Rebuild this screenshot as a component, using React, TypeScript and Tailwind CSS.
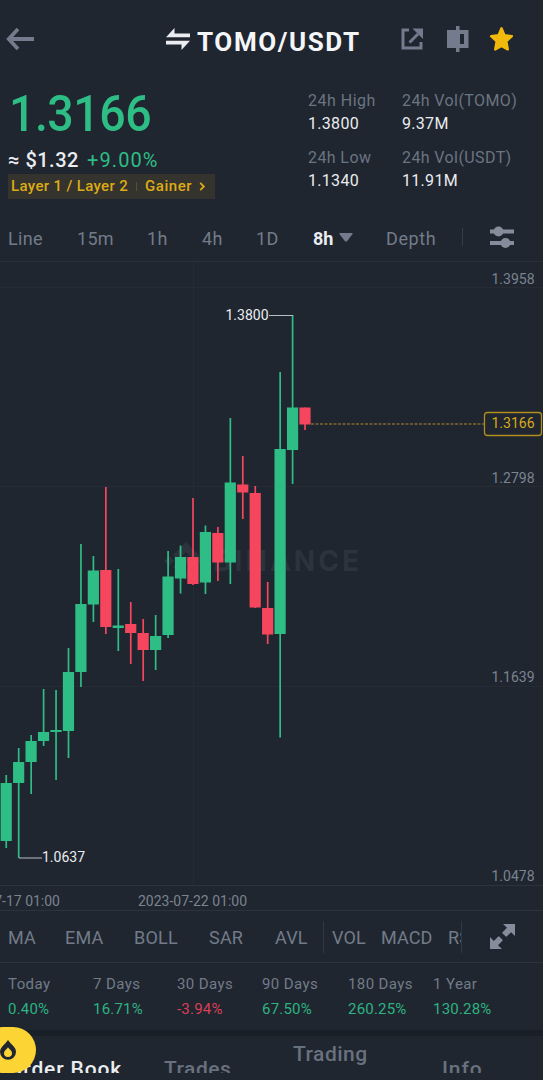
import clsx from "clsx";

const intervals = ["Line", "15m", "1h", "4h", "1D"];

const indicators = ["MA", "EMA", "BOLL", "SAR", "AVL"];

const returns = [
  { label: "Today", value: "0.40%" },
  { label: "7 Days", value: "16.71%" },
  { label: "30 Days", value: "-3.94%" },
  { label: "90 Days", value: "67.50%" },
  { label: "180 Days", value: "260.25%" },
  { label: "1 Year", value: "130.28%" },
];

const stats = [
  { label: "24h High", value: "1.3800", tracking: "tracking-[0.5px]" },
  { label: "24h Vol(TOMO)", value: "9.37M", tracking: "tracking-[0.4px]" },
  { label: "24h Low", value: "1.1340", tracking: "tracking-[0.4px]" },
  { label: "24h Vol(USDT)", value: "11.91M", tracking: "tracking-[0.4px]" },
];

// [up, body top, body bottom, wick top, wick bottom]
const candles: [boolean, number, number, number, number][] = [
  [true, 783, 841, 775, 848],
  [true, 762, 783, 748, 858],
  [true, 741, 762, 735, 794],
  [true, 732, 741, 689, 746],
  [true, 730, 732, 690, 780],
  [true, 672, 731, 648, 758],
  [true, 604, 672, 544, 687],
  [true, 570.5, 604.5, 556, 622],
  [false, 570, 627, 487, 634],
  [true, 625.5, 628, 569, 651],
  [false, 624, 633, 602, 664],
  [false, 633, 650, 619, 681],
  [true, 636, 650, 615, 670],
  [true, 576.5, 635, 551, 638],
  [true, 557, 578.5, 545.5, 593.5],
  [false, 557, 584, 498, 585],
  [true, 532, 582.5, 525.5, 594],
  [false, 533, 562.5, 527, 581],
  [true, 482.5, 562.5, 418, 584],
  [false, 484.5, 492.5, 456, 519],
  [false, 493, 607.5, 486, 608],
  [false, 608, 634.5, 582, 644],
  [true, 449, 634, 372, 737.5],
  [true, 407.5, 450, 315, 484],
  [false, 407.5, 424.5, 407.5, 430],
];

const priceScale = [
  { y: 284, label: "1.3958" },
  { y: 483, label: "1.2798" },
  { y: 682, label: "1.1639" },
  { y: 881, label: "1.0478" },
];

function Header() {
  return (
    <header className="flex h-[78px] items-center">
      <svg className="ml-[6px] h-[24px] w-[30px]" viewBox="0 0 30 24" fill="none" stroke="#737b8c" strokeWidth="3.8">
        <path d="M28 12H4M12 2L2.8 12l9.2 10" />
      </svg>
      <svg className="ml-[129px] h-[24px] w-[26px]" viewBox="0 0 26 24" fill="#eaecef">
        <path d="M1 10.3L9.500 1v5.400H25v3.900zM25 13.700L16.500 23v-5.400H1v-3.900z" />
      </svg>
      <h1 className="mt-[6px] ml-[6px] w-[166px] text-[26px] font-bold tracking-[1.6px] text-[#f5f6f8]">TOMO/USDT</h1>
      <svg className="ml-[37px] h-[24px] w-[24px]" viewBox="0 0 24 24" fill="none" stroke="#737b8c" strokeWidth="3">
        <path d="M9 3H3v18h18V15M9.5 15.5L18 7" />
        <path d="M12.5 1.500H23V12z" fill="#737b8c" stroke="none" />
      </svg>
      <svg className="ml-[22px] h-[28px] w-[23px]" viewBox="0 0 23 28" fill="#737b8c">
        <path d="M1 5h9V1h3.5v4h9v18h-9v4H10v-4H1zM14 9v10h4V9z" fillRule="evenodd" />
      </svg>
      <svg className="ml-[20px] h-[26px] w-[25px]" viewBox="0 0 25 26" fill="#f0b90b" stroke="#f0b90b" strokeWidth="2.4" strokeLinejoin="round">
        <path d="M12.5 2.3l2.900 6.900 7.500 1-5.600 5.100 1.500 8.100-6.300-3.500-6.300 3.500 1.500-8.100-5.600-5.100 7.500-1z" />
      </svg>
    </header>
  );
}

function Summary() {
  return (
    <section className="flex h-[138px] pl-[8px]">
      <div className="w-[300px]">
        <p className="mt-[9px] w-[160px] origin-left scale-x-[0.93] pl-[1px] text-[50px] leading-[54px] font-medium tracking-[-0.5px] text-[#2ebd85]">1.3166</p>
        <div className="mt-[6px] flex h-[26px] items-center gap-[8px] text-[20px] leading-[26px]">
          <span className="w-[71px] font-medium tracking-[0.5px] whitespace-nowrap text-[#eaecef]">≈ $1.32</span>
          <span className="tracking-[1.1px] text-[#2ebd85]">+9.00%</span>
        </div>
        <div className="mt-[1px] flex h-[25px] w-[207px] items-center bg-[#35332d] pl-[3px] text-[15px] font-medium text-[#dcab17]">
          <span className="w-[118px] tracking-[0.35px]">Layer 1 / Layer 2</span>
          <span className="ml-[7px] h-[9px] w-px bg-[#55503a]" />
          <span className="ml-[8px] tracking-[0.55px]">Gainer</span>
          <svg className="ml-[7px] h-[9px] w-[7px]" viewBox="0 0 7 10" fill="none" stroke="#dcab17" strokeWidth="2">
            <path d="M1 1l4 4-4 4" />
          </svg>
        </div>
      </div>
      <dl className="grid h-[127px] grid-cols-[94px_130px] grid-rows-[57px_58px] pt-[11px]">
        {stats.map((s) => (
          <div key={s.label} className="text-[16px] leading-[23px]">
            <dt className={clsx("whitespace-nowrap text-[#6b7481]", s.tracking)}>{s.label}</dt>
            <dd className="tracking-[0.3px] text-[#eaecef]">{s.value}</dd>
          </div>
        ))}
      </dl>
    </section>
  );
}

function IntervalBar() {
  return (
    <nav className="grid h-[46px] grid-cols-[69px_70px_55px_54px_57px_73px_76px_1fr] items-center border-b border-[#29303a] pl-[8px] text-[18px] text-[#737b88]">
      {intervals.map((t) => (
        <span key={t} className="tracking-[0.3px]">{t}</span>
      ))}
      <span className="flex items-center gap-[6px] font-bold text-[#eaecef]">
        8h
        <svg className="mb-[2px] h-[9px] w-[14px]" viewBox="0 0 14 9" fill="#737b8c">
          <path d="M1 0h12q1 0 .6.9L8 8.2Q7 9 6 8.2L.4.9Q0 0 1 0z" />
        </svg>
      </span>
      <span className="tracking-[0.6px]">Depth</span>
      <span className="mb-[3px] flex items-center gap-[27px]">
        <i className="h-[18px] w-px bg-[#343c48]" />
        <svg className="h-[24px] w-[24px]" viewBox="0 0 24 24" fill="#858d9c">
          <path d="M0 4.5h24v4H0zM0 16h24v4H0z" />
          <circle cx="8.5" cy="6.5" r="5" />
          <circle cx="15.5" cy="18" r="5" />
        </svg>
      </span>
    </nav>
  );
}

function Chart() {
  return (
    <svg className="block h-[648px] w-[543px]" viewBox="0 262 543 648" fontFamily="Roboto, sans-serif" fontSize="14">
      <g stroke="#252c36" strokeWidth="1">
        <path d="M193.5 262V885M0 287.5H543M0 486.5H543M0 686.5H543" />
        <path d="M0 885.5H543" stroke="#2c333d" />
      </g>

      {/* watermark */}
      <g fill="#2c333d">
        <path d="M186 542l13 13-5 5-8-8-8 8-5-5zM169 556l5 5-5 5-5-5zM203 556l5 5-5 5-5-5zM186 556l5 5-5 5-5-5zM173 567l5-5 8 8 8-8 5 5-13 13z" />
        <text x="213" y="571" fontSize="28" fontWeight="700" textLength="146" fontFamily="Inter, sans-serif">BINANCE</text>
      </g>

      {candles.map(([up, top, bottom, high, low], i) => {
        const x = 6.2 + i * 12.45;
        return (
          <g key={i} fill={up ? "#2ebd85" : "#f6465d"}>
            <rect x={x - 0.8} y={high} width="1.7" height={low - high} />
            <rect x={x - 5.6} y={top} width="11.2" height={bottom - top} />
          </g>
        );
      })}

      {/* high / low markers */}
      <path d="M269 315.5H293M19 858H42" stroke="#b7bdc6" strokeWidth="1.2" />
      <g fill="#eaecef">
        <text x="225.5" y="319.5">1.3800</text>
        <text x="42" y="862">1.0637</text>
      </g>

      <path d="M311 424H484" stroke="#7d6a2f" strokeWidth="1.4" strokeDasharray="3 1.5" />
      <rect x="484.5" y="412.5" width="57" height="23" rx="3" fill="#1f2630" stroke="#b08d1c" strokeWidth="1.3" />
      <text x="491.5" y="428" fill="#d9aa18">1.3166</text>

      <g fill="#7b838f">
        {priceScale.map((p) => (
          <text key={p.label} x="491.5" y={p.y}>{p.label}</text>
        ))}
        <text x="60" y="906" textAnchor="end">2023-07-17 01:00</text>
        <text x="138" y="906">2023-07-22 01:00</text>
      </g>
    </svg>
  );
}

function IndicatorBar() {
  return (
    <nav className="flex h-[53px] items-center border-y border-[#2c333d] pl-[8px] text-[18px] text-[#737b88]">
      <div className="mt-[2px] grid grid-cols-[57px_69px_75px_66px_48px] tracking-[0.2px]">
        {indicators.map((t) => (
          <span key={t}>{t}</span>
        ))}
      </div>
      <div className="flex h-[32px] w-[139px] items-center overflow-hidden border-x border-[#303843] pt-[2px] pl-[8px] tracking-[0.1px]">
        <span className="w-[49px] shrink-0">VOL</span>
        <span className="w-[67px] shrink-0">MACD</span>
        <span className="shrink-0">RSI</span>
      </div>
      <svg className="ml-[28px] h-[25px] w-[25px]" viewBox="0 0 24 24" fill="#858d9c">
        <path d="M12.5 0H24v11.5l-3.7-3.7-4.5 4.4q-1.5-.3-2.2-1.8-1.7-.6-1.8-2.2L16.3 3.7zM11.5 24H0V12.5l3.7 3.7 4.5-4.4q1.5.3 2.2 1.8 1.7.6 1.8 2.2L7.7 20.3z" />
      </svg>
    </nav>
  );
}

function Returns() {
  return (
    <section className="grid h-[67px] grid-cols-[85px_84px_85px_86px_85px_1fr] pt-[9px] pl-[8px] text-[15px] leading-[25px]">
      {returns.map((r) => (
        <div key={r.label}>
          <p className="tracking-[0.4px] text-[#737b88]">{r.label}</p>
          <p className={clsx("tracking-[0.2px]", r.value.startsWith("-") ? "text-[#d93f56]" : "text-[#2eb380]")}>{r.value}</p>
        </div>
      ))}
    </section>
  );
}

function BottomTabs() {
  return (
    <footer className="relative h-[50px]">
      <div className="h-[6px] bg-[#191f27]" />
      <div className="flex h-[37px] items-start overflow-hidden text-[21px] leading-[28px] font-medium text-[#69717e]">
        <span className="mt-[19px] ml-[8px] w-[156px] tracking-[0.85px] text-[#eaecef]">Order Book</span>
        <span className="mt-[19px] w-[129px] tracking-[0.5px]">Trades</span>
        <span className="mt-[4px] w-[149px] tracking-[0.5px]">Trading<br />Data</span>
        <span className="mt-[19px] tracking-[0.9px]">Info</span>
      </div>
      <button className="absolute -top-[3px] -left-[20px] flex h-[46px] w-[56px] items-center rounded-full bg-[#fcd535] pl-[19px]">
        <svg className="h-[20px] w-[18px]" viewBox="0 0 18 20">
          <path d="M9 0q2.5 3.5 5.5 6.2Q17 8.7 17 11.8a8 8 0 0 1-16 0Q1 8.7 3.5 6.2 6.5 3.5 9 0z" fill="#1f2630" />
          <path d="M9 7.2q1 1.5 2.5 2.9 1.5 1.4 1.5 3a4 4 0 0 1-8 0q0-1.6 1.5-3Q8 8.7 9 7.2z" fill="#fcd535" />
        </svg>
      </button>
    </footer>
  );
}

export default function App() {
  return (
    <main className="h-[1080px] w-[543px] overflow-hidden bg-[#1f2630] font-[Roboto,sans-serif]">
      <Header />
      <Summary />
      <IntervalBar />
      <Chart />
      <IndicatorBar />
      <Returns />
      <BottomTabs />
    </main>
  );
}
